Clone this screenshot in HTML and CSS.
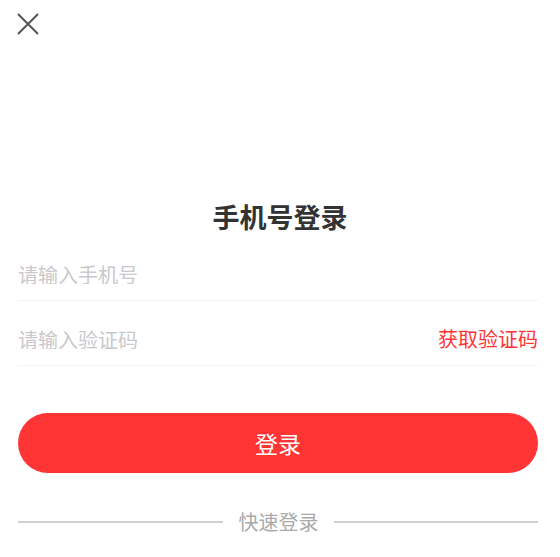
FILE: index.html
```html
<!DOCTYPE html>
<html>
<head>
    <meta charset="UTF-8">
    <title>手机号登录</title>
    <link rel="stylesheet" href="styles.css">
</head>
<body>
<div class="page">
    <div class="top">
        <a class="close" href="javascript:;">
            <svg width="22" height="22" viewBox="0 0 22 22">
                <path d="M1 1L21 21M21 1L1 21" stroke="#555" stroke-width="2" fill="none"/>
            </svg>
        </a>
    </div>
    <h1 class="title">手机号登录</h1>
    <div class="form">
        <div class="row">
            <input type="text" placeholder="请输入手机号">
        </div>
        <div class="row">
            <input type="text" placeholder="请输入验证码">
            <span class="code">获取验证码</span>
        </div>
        <button class="btn">登录</button>
        <div class="quick">
            <span class="line"></span>
            <span class="quick-txt">快速登录</span>
            <span class="line"></span>
        </div>
    </div>
</div>
</body>
</html>
```

FILE: styles.css
```css
*{
    margin: 0;
    padding: 0;
}
body{
    background: #fff;
    font-family: "Noto Sans CJK SC", "Noto Sans", sans-serif;
}
.page{
    width: 560px;
}
.top{
    height: 36px;
    padding: 13px 0 0 17px;
}
.close{
    display: block;
    width: 22px;
    height: 22px;
}
.close svg{
    display: block;
}
/*标题*/
.title{
    margin-top: 150px;
    font-size: 27px;
    line-height: 36px;
    font-weight: bold;
    color: #333;
    text-align: center;
}
.form{
    width: 520px;
    margin: 1px 0 0 18px;
}
.row{
    display: flex;
    align-items: center;
    height: 20px;
    padding: 28px 0 16px;
    border-bottom: 1px solid #f3f3f3;
}
.row input{
    flex: 1;
    border: none;
    outline: none;
    font-family: inherit;
    font-size: 20px;
    line-height: 20px;
    height: 20px;
    color: #333;
    background: transparent;
}
.row input::placeholder{
    color: #c8c9cc;
}
.code{
    font-size: 20px;
    line-height: 20px;
    color: #ff3434;
}
.btn{
    display: block;
    width: 100%;
    height: 60px;
    margin-top: 47px;
    border: none;
    border-radius: 30px;
    background: #ff3434;
    color: #fff;
    font-family: inherit;
    font-size: 23px;
}
/*快速登录*/
.quick{
    display: flex;
    align-items: center;
    margin-top: 39px;
    height: 20px;
}
.line{
    flex: 1;
    height: 2px;
    background: #d0d0d0;
}
.quick-txt{
    padding: 0 15px 0 16px;
    font-size: 20px;
    line-height: 20px;
    color: #aaa;
}
```
